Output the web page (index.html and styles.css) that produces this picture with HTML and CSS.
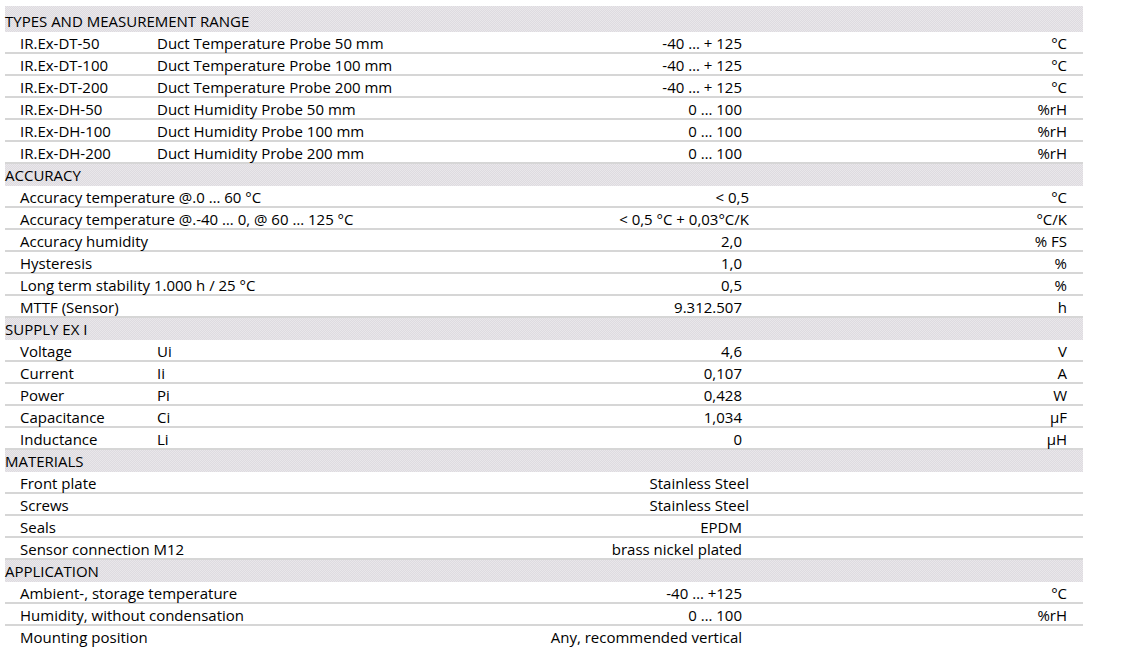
FILE: index.html
```html
<!DOCTYPE html>
<html>
<head>
<meta charset="utf-8">
<link rel="stylesheet" href="styles.css">
</head>
<body>
<div class="sheet">
  <div class="head first">TYPES AND MEASUREMENT RANGE</div>
  <div class="row"><span class="c1">IR.Ex-DT-50</span><span class="c2">Duct Temperature Probe 50 mm</span><span class="val">-40 … + 125</span><span class="unit">°C</span></div>
  <div class="row"><span class="c1">IR.Ex-DT-100</span><span class="c2">Duct Temperature Probe 100 mm</span><span class="val">-40 … + 125</span><span class="unit">°C</span></div>
  <div class="row"><span class="c1">IR.Ex-DT-200</span><span class="c2">Duct Temperature Probe 200 mm</span><span class="val">-40 … + 125</span><span class="unit">°C</span></div>
  <div class="row"><span class="c1">IR.Ex-DH-50</span><span class="c2">Duct Humidity Probe 50 mm</span><span class="val">0 … 100</span><span class="unit">%rH</span></div>
  <div class="row"><span class="c1">IR.Ex-DH-100</span><span class="c2">Duct Humidity Probe 100 mm</span><span class="val">0 … 100</span><span class="unit">%rH</span></div>
  <div class="row"><span class="c1">IR.Ex-DH-200</span><span class="c2">Duct Humidity Probe 200 mm</span><span class="val">0 … 100</span><span class="unit">%rH</span></div>

  <div class="head">ACCURACY</div>
  <div class="row"><span class="c1 wide">Accuracy temperature @.0 … 60 °C</span><span class="val"><span class="shift">&lt; 0,5</span></span><span class="unit">°C</span></div>
  <div class="row"><span class="c1 wide">Accuracy temperature @.-40 … 0, @ 60 … 125 °C</span><span class="val"><span class="shift">&lt; 0,5 °C + 0,03°C/K</span></span><span class="unit">°C/K</span></div>
  <div class="row"><span class="c1 wide">Accuracy humidity</span><span class="val">2,0</span><span class="unit">% FS</span></div>
  <div class="row"><span class="c1 wide">Hysteresis</span><span class="val">1,0</span><span class="unit">%</span></div>
  <div class="row"><span class="c1 wide">Long term stability 1.000 h / 25 °C</span><span class="val">0,5</span><span class="unit">%</span></div>
  <div class="row"><span class="c1 wide">MTTF (Sensor)</span><span class="val">9.312.507</span><span class="unit">h</span></div>

  <div class="head">SUPPLY EX I</div>
  <div class="row"><span class="c1">Voltage</span><span class="c2">Ui</span><span class="val">4,6</span><span class="unit">V</span></div>
  <div class="row"><span class="c1">Current</span><span class="c2">Ii</span><span class="val">0,107</span><span class="unit">A</span></div>
  <div class="row"><span class="c1">Power</span><span class="c2">Pi</span><span class="val">0,428</span><span class="unit">W</span></div>
  <div class="row"><span class="c1">Capacitance</span><span class="c2">Ci</span><span class="val">1,034</span><span class="unit">µF</span></div>
  <div class="row"><span class="c1">Inductance</span><span class="c2">Li</span><span class="val">0</span><span class="unit">µH</span></div>

  <div class="head">MATERIALS</div>
  <div class="row"><span class="c1 wide">Front plate</span><span class="val"><span class="shift">Stainless Steel</span></span><span class="unit"></span></div>
  <div class="row"><span class="c1 wide">Screws</span><span class="val"><span class="shift">Stainless Steel</span></span><span class="unit"></span></div>
  <div class="row"><span class="c1 wide">Seals</span><span class="val">EPDM</span><span class="unit"></span></div>
  <div class="row"><span class="c1 wide">Sensor connection M12</span><span class="val">brass nickel plated</span><span class="unit"></span></div>

  <div class="head">APPLICATION</div>
  <div class="row"><span class="c1 wide">Ambient-, storage temperature</span><span class="val">-40 … +125</span><span class="unit">°C</span></div>
  <div class="row"><span class="c1 wide">Humidity, without condensation</span><span class="val">0 … 100</span><span class="unit">%rH</span></div>
  <div class="row last"><span class="c1 wide">Mounting position</span><span class="val">Any, recommended vertical</span><span class="unit"></span></div>
</div>
</body>
</html>
```

FILE: styles.css
```css
html, body {
  margin: 0;
  padding: 0;
  background: #ffffff;
}

body {
  font-family: "Open Sans", "Liberation Sans", Arial, sans-serif;
  font-size: 15px;
  color: #000000;
}

.sheet {
  width: 1078px;
  margin: 6px 0 0 5px;
  padding-bottom: 12px;
  display: flex;
  flex-direction: column;
}

.head {
  height: 19px;
  padding-top: 3px;
  line-height: 16px;
  background-color: #e4e2e5;
  background-image: repeating-conic-gradient(#e9e7ea 0 25%, #dedbe0 0 50%);
  background-size: 2px 2px;
  white-space: nowrap;
}

.head.first {
  padding-top: 7px;
}

.row {
  display: grid;
  grid-template-columns: 137px 345px 240px 325px;
  padding: 3px 16px 0 15px;
  height: 17px;
  line-height: 16px;
  border-bottom: 2px solid #d6d6d6;
  white-space: nowrap;
}

.row.last {
  border-bottom: 0;
  height: 19px;
}

.c1.wide {
  grid-column: span 2;
}

.val {
  text-align: right;
}

.unit {
  text-align: right;
}

.shift {
  margin-right: -7px;
}
```
